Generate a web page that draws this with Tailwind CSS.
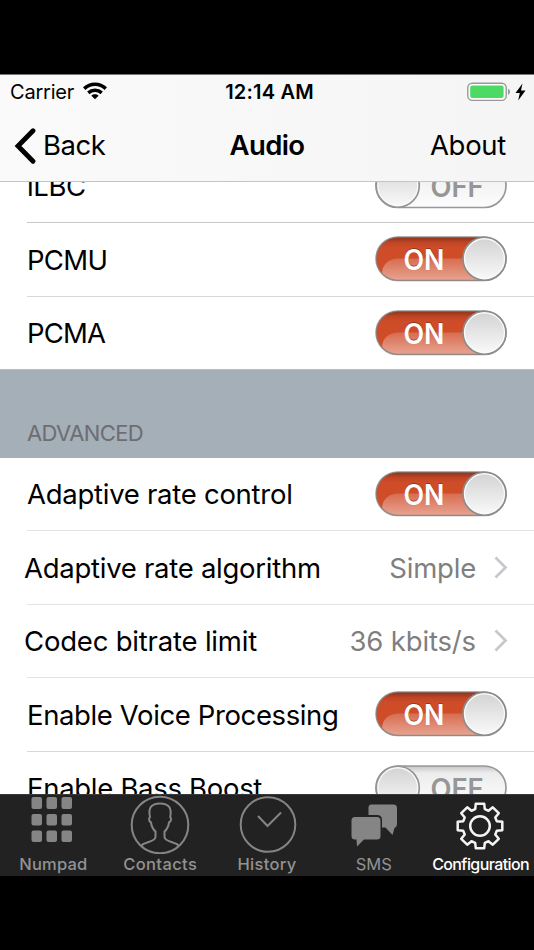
<!DOCTYPE html>
<html lang="en">
<head>
  <meta charset="UTF-8" />
  <title>Audio</title>
  <script src="https://cdn.jsdelivr.net/npm/@tailwindcss/browser@4"></script>
</head>
<body class="bg-black w-[534px] h-[950px] overflow-hidden font-['Inter','Liberation_Sans',sans-serif] text-black">
  <!-- shared switch artwork -->
  <svg class="absolute w-0 h-0" aria-hidden="true">
    <defs>
      <linearGradient id="red" x1="0" y1="0" x2="0" y2="1">
        <stop offset="0" stop-color="#8a341c" />
        <stop offset=".13" stop-color="#c04525" />
        <stop offset=".25" stop-color="#cf4c29" />
        <stop offset="1" stop-color="#d04d2a" />
      </linearGradient>
      <linearGradient id="gloss" x1="0" y1="0" x2="0" y2="1">
        <stop offset="0" stop-color="#fff" stop-opacity=".18" />
        <stop offset="1" stop-color="#fff" stop-opacity=".48" />
      </linearGradient>
      <linearGradient id="knob" x1="0" y1="0" x2="0" y2="1">
        <stop offset="0" stop-color="#d4d4d4" />
        <stop offset="1" stop-color="#f8f8f8" />
      </linearGradient>
      <linearGradient id="grey" x1="0" y1="0" x2="0" y2="1">
        <stop offset="0" stop-color="#c4c4c4" />
        <stop offset=".16" stop-color="#ececec" />
        <stop offset=".5" stop-color="#f4f4f4" />
        <stop offset="1" stop-color="#fdfdfd" />
      </linearGradient>
      <symbol id="on" viewBox="0 0 132 46">
        <rect x="1" y="1" width="130" height="43.5" rx="21.75" fill="url(#red)" />
        <path d="M7 38C7 28 14 22.500 24 22.500H110V44H23C16 44 10 42 7 38z" fill="url(#gloss)" />
        <rect x="1" y="1" width="130" height="43.5" rx="21.75" fill="none" stroke="#808080" stroke-opacity=".8" stroke-width="1.500" />
        <text x="28.500" y="32.800" font-size="28" font-weight="600" textLength="41" lengthAdjust="spacingAndGlyphs" fill="#6b2a1a" fill-opacity=".6">ON</text>
        <text x="28.500" y="34" font-size="28" font-weight="600" textLength="41" lengthAdjust="spacingAndGlyphs" fill="#fff">ON</text>
        <circle cx="109.500" cy="22.750" r="21.500" fill="#fafafa" stroke="#8c8c8c" stroke-width="1.700" />
        <circle cx="109.500" cy="22.750" r="19.300" fill="url(#knob)" />
      </symbol>
      <symbol id="off" viewBox="0 0 132 46">
        <rect x="1" y="1" width="130" height="43.500" rx="21.750" fill="url(#grey)" stroke="#989898" stroke-width="1.700" />
        <text x="55.500" y="34" font-size="28" font-weight="600" textLength="53" lengthAdjust="spacingAndGlyphs" fill="#969696">OFF</text>
        <circle cx="22.750" cy="22.750" r="21.500" fill="#fafafa" stroke="#949494" stroke-width="1.700" />
        <circle cx="22.750" cy="22.750" r="19.300" fill="url(#knob)" />
      </symbol>
    </defs>
  </svg>

  <div class="flex flex-col h-full pt-[74px] pb-[74px]">
    <header class="shrink-0 h-[108px] bg-gradient-to-r from-[#fafafa] to-[#f5f5f5] border-t border-b border-t-[#777] border-b-[#c4c4c4]">
      <div class="grid grid-cols-3 items-center h-[34px] pl-[10px] pr-[8px] text-[20px]">
        <div class="flex items-center gap-[9px]">
          <span class="tracking-[-0.2px]">Carrier</span>
          <svg class="w-[24px] h-[18px] -mt-[2px]" viewBox="0 0 24 18" fill="none" stroke="#000" stroke-width="3.500">
            <path d="M1.200 6.600C7.300 .9 16.700 .9 22.800 6.600" />
            <path d="M5.300 10.900C9.100 7.400 14.900 7.400 18.700 10.900" />
            <path d="M12 17.300L8.400 13.700C10.400 11.900 13.600 11.900 15.600 13.700z" fill="#000" stroke="none" />
          </svg>
        </div>
        <span class="text-center font-semibold tracking-[0.2px] pl-[3px] whitespace-nowrap">12:14 AM</span>
        <div class="flex items-center justify-end gap-[4px]">
          <svg class="w-[44px] h-[20px]" viewBox="0 0 44 20">
            <rect x=".8" y="1.200" width="38.400" height="17.200" rx="4.500" fill="#fff" stroke="#999" stroke-width="1.400" />
            <rect x="3.200" y="3.600" width="33.400" height="12.400" rx="2" fill="#4cd964" />
            <path d="M41 6.800C43.700 7.800 43.700 11.800 41 12.800z" fill="#999" />
          </svg>
          <svg class="w-[11px] h-[18px]" viewBox="0 0 11 18"><path d="M7.500 .5L.5 10H4.800L3.200 17.500L10.500 7.500H6z" /></svg>
        </div>
      </div>
      <div class="grid grid-cols-3 items-center h-[73px] pl-[14px] pr-[28px] text-[27.5px]">
        <div class="flex items-center gap-[7px]">
          <svg class="w-[22px] h-[36px]" viewBox="0 0 22 36" fill="none" stroke="#000" stroke-width="4.800" stroke-linecap="round" stroke-linejoin="miter"><path d="M19 2.800L4 18L19 33.200" /></svg>
          <span class="tracking-[-0.5px]">Back</span>
        </div>
        <span class="text-center font-semibold tracking-[-0.6px] pl-[14px]">Audio</span>
        <span class="text-right tracking-[-0.3px]">About</span>
      </div>
    </header>

    <main class="flex-1 min-h-0 overflow-hidden bg-white text-[27.5px]">
      <ul class="-mt-[33px] pl-[27px]">
        <li class="flex items-start justify-between h-[74px] pr-[27px] border-b border-[#c8c8cb]">
          <span class="pt-[17px] tracking-[-0.4px]">iLBC</span>
          <svg class="mt-[14px] w-[132px] h-[46px]"><use href="#off" /></svg>
        </li>
        <li class="flex items-start justify-between h-[74px] pr-[27px] border-b border-[#d8d8da]">
          <span class="pt-[17px] tracking-[-0.7px]">PCMU</span>
          <svg class="mt-[13px] w-[132px] h-[46px]"><use href="#on" /></svg>
        </li>
        <li class="flex items-start justify-between h-[72px] pr-[27px]">
          <span class="pt-[16px] tracking-[-0.8px]">PCMA</span>
          <svg class="mt-[13px] w-[132px] h-[46px]"><use href="#on" /></svg>
        </li>
      </ul>

      <h2 class="h-[89px] pl-[27px] pt-[47px] bg-[#a5afb8] border-t border-[#b9bdc3] text-[22px] text-[#6d6d72] tracking-[-0.6px]">ADVANCED</h2>

      <ul class="pl-[27px]">
        <li class="flex items-start justify-between h-[73px] pr-[27px] border-b border-[#e3e3e5]">
          <span class="pt-[16px] tracking-[-0.27px]">Adaptive rate control</span>
          <svg class="mt-[13px] w-[132px] h-[46px]"><use href="#on" /></svg>
        </li>
        <li class="flex items-start justify-between h-[74px] pr-[26px] border-b border-[#e3e3e5]">
          <span class="pt-[17px] -ml-[3px] tracking-[-0.27px]">Adaptive rate algorithm</span>
          <div class="flex items-start gap-[18px] text-[#7f7f7f]">
            <span class="pt-[17px] tracking-[-0.2px]">Simple</span>
            <svg class="mt-[25px] w-[14px] h-[23px]" viewBox="0 0 14 23" fill="none" stroke="#c7c7cc" stroke-width="2.800"><path d="M1.500 1.500L11.500 11.500L1.500 21.500" /></svg>
          </div>
        </li>
        <li class="flex items-start justify-between h-[73px] pr-[26px] border-b border-[#e3e3e5]">
          <span class="pt-[16px] -ml-[3px] tracking-[-0.2px]">Codec bitrate limit</span>
          <div class="flex items-start gap-[18px] text-[#7f7f7f]">
            <span class="pt-[16px] tracking-[-0.15px]">36 kbits/s</span>
            <svg class="mt-[24px] w-[14px] h-[23px]" viewBox="0 0 14 23" fill="none" stroke="#c7c7cc" stroke-width="2.800"><path d="M1.500 1.500L11.500 11.500L1.500 21.500" /></svg>
          </div>
        </li>
        <li class="flex items-start justify-between h-[74px] pr-[27px] border-b border-[#d8d8da]">
          <span class="pt-[17px] tracking-[-0.38px]">Enable Voice Processing</span>
          <svg class="mt-[13px] w-[132px] h-[46px]"><use href="#on" /></svg>
        </li>
        <li class="flex items-start justify-between h-[73px] pr-[27px]">
          <span class="pt-[16px] tracking-[-0.3px]">Enable Bass Boost</span>
          <svg class="mt-[13px] w-[132px] h-[46px]"><use href="#off" /></svg>
        </li>
      </ul>
    </main>

    <nav class="shrink-0 grid grid-cols-5 h-[82px] bg-[#222] border-t border-[#3a3a3a] text-[16.5px] leading-[20px] font-medium text-[#929292]">
      <a class="flex flex-col items-center">
        <svg class="w-[60px] h-[59px]" viewBox="0 1 60 59" fill="#858585">
          <rect x="8.500" y="3" width="10.500" height="12" rx="2" /><rect x="23.500" y="3" width="10.500" height="12" rx="2" /><rect x="38.500" y="3" width="10.500" height="12" rx="2" />
          <rect x="8.500" y="20" width="10.500" height="11.500" rx="2" /><rect x="23.500" y="20" width="10.500" height="11.500" rx="2" /><rect x="38.500" y="20" width="10.500" height="11.500" rx="2" />
          <rect x="8.500" y="36.500" width="10.500" height="11.500" rx="2" /><rect x="23.500" y="36.500" width="10.500" height="11.500" rx="2" /><rect x="38.500" y="36.500" width="10.500" height="11.500" rx="2" />
        </svg>
        <span class="tracking-[0.2px]">Numpad</span>
      </a>
      <a class="flex flex-col items-center">
        <svg class="w-[60px] h-[59px]" viewBox="0 1 60 59" fill="none" stroke="#858585" stroke-width="2">
          <circle cx="30" cy="31" r="28.300" />
          <path d="M11.500 51.500C14 48 25.500 48 25.500 43V37.500C22.500 35 21.500 32 21 28.500C18.800 27.500 18.500 24 20 23C18 14 21 9.500 30 9.500S42 14 40.200 23C41.700 24 41.200 27.500 39 28.500C38.500 32 37.500 35 34.500 37.500V43C34.500 48 46 48 48.500 51.500" />
        </svg>
        <span class="tracking-[0.4px]">Contacts</span>
      </a>
      <a class="flex flex-col items-center">
        <svg class="w-[60px] h-[59px]" viewBox="0 1 60 59" fill="none" stroke="#858585" stroke-width="2">
          <circle cx="31" cy="30.500" r="27.300" />
          <path d="M21 22L30.500 32L44 18.500" />
        </svg>
        <span class="tracking-[0.3px]">History</span>
      </a>
      <a class="flex flex-col items-center">
        <svg class="w-[60px] h-[59px]" viewBox="0 1 60 59" fill="#858585">
          <path d="M27 10.500H49.500Q53 10.500 53 14V29.500Q53 33 50.500 34L48.500 41L41.500 33.500H38V26Q38 21 33 21H24.500V14Q24.500 10.500 27 10.500z" />
          <path d="M11 23H33Q36.500 23 36.500 26.500V42Q36.500 45.500 33 45.500H20L13 52.500L12.500 45.500H11Q7.500 45.500 7.500 42V26.500Q7.500 23 11 23z" />
        </svg>
        <span class="font-normal">SMS</span>
      </a>
      <a class="flex flex-col items-center text-white">
        <svg class="w-[60px] h-[59px]" viewBox="-29 -31 60 59" fill="none" stroke="#f4f4f4" stroke-width="2.500" stroke-linejoin="round">
          <path d="M-4.800-16.800L-4.200-22.300 4.200-22.300 4.800-16.800 8.490-15.270 12.800-18.740 18.740-12.800 15.270-8.490 16.800-4.800 22.300-4.200 22.300 4.200 16.800 4.800 15.270 8.490 18.740 12.800 12.800 18.740 8.490 15.270 4.800 16.800 4.200 22.300-4.200 22.300-4.800 16.800-8.490 15.270-12.800 18.740-18.740 12.800-15.270 8.490-16.800 4.800-22.300 4.200-22.300-4.200-16.800-4.800-15.270-8.490-18.740-12.800-12.800-18.740-8.490-15.270z" />
          <circle r="9.800" />
        </svg>
        <span class="text-[16px] tracking-[-0.6px]">Configuration</span>
      </a>
    </nav>
  </div>
</body>
</html>
